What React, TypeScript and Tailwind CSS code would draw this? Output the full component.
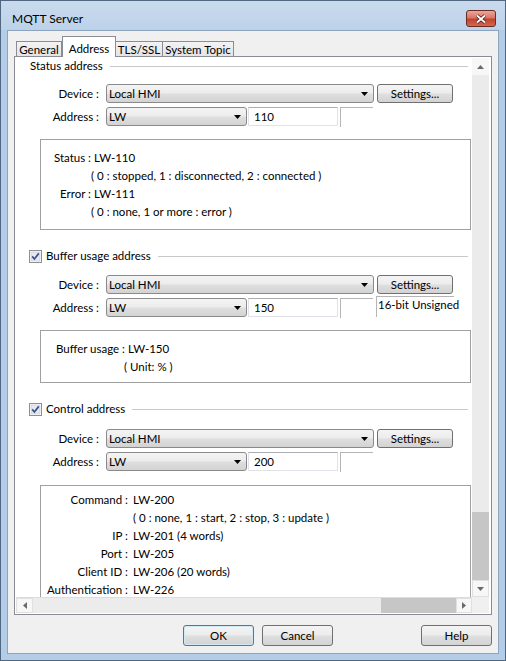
import React from "react";

const font = "font-['Lato','Noto_Sans',sans-serif]";
const btnBg =
  "bg-[linear-gradient(#f4f4f4_0%,#ececec_48%,#dfdfdf_52%,#d3d3d3_100%)]";

function Arrow({ dir, color = "#000" }: { dir: "up" | "down" | "left" | "right"; color?: string }) {
  const d = {
    down: "M0 0h7L3.5 4z",
    up: "M0 4h7L3.5 0z",
    right: "M0 0v7l4-3.5z",
    left: "M4 0v7L0 3.5z",
  }[dir];
  const vertical = dir === "up" || dir === "down";
  return (
    <svg width={vertical ? 7 : 4} height={vertical ? 4 : 7} viewBox={vertical ? "0 0 7 4" : "0 0 4 7"}>
      <path d={d} fill={color} />
    </svg>
  );
}

function Combo({ value, className }: { value: string; className: string }) {
  return (
    <div
      className={`flex h-[19px] items-center justify-between rounded-[3px] border border-[#8a8a8a] ${btnBg} pl-[2px] pr-[5px] ${className}`}
    >
      <span>{value}</span>
      <Arrow dir="down" />
    </div>
  );
}

function Button({ label, className }: { label: string; className: string }) {
  return (
    <div
      className={`flex items-center justify-center rounded-[3px] border border-[#707070] ${btnBg} ${className}`}
    >
      {label}
    </div>
  );
}

function Checkbox() {
  return (
    <svg width="13" height="13" viewBox="0 0 13 13">
      <rect x="0.5" y="0.5" width="12" height="12" fill="#fff" stroke="#8f8f8f" />
      <rect x="2" y="2" width="9" height="9" fill="#e6e9ee" stroke="#c4c8d0" strokeWidth="0.6" />
      <path d="M3.2 6.4 L5.4 9 L9.8 3.4" fill="none" stroke="#3b4f8f" strokeWidth="1.7" />
    </svg>
  );
}

function GroupHeader({ title, check, className = "" }: { title: string; check?: boolean; className?: string }) {
  return (
    <div className={`flex h-[16px] items-center ${check ? "pl-[13px]" : "pl-[14px]"} pr-[4px] ${className}`}>
      {check && (
        <span className="mr-[4px] flex">
          <Checkbox />
        </span>
      )}
      <span>{title}</span>
      <div className="ml-[7px] h-px flex-1 bg-[#c9c9c9]" />
    </div>
  );
}

function DeviceRows({ value, unit, className }: { value: string; unit?: string; className: string }) {
  return (
    <div className={className}>
      <div className="flex h-[19px] items-center">
        <span className="w-[83px] text-right">Device :</span>
        <Combo value="Local HMI" className="ml-[7px] w-[268px]" />
        <Button label="Settings..." className="ml-[3px] h-[19px] w-[76px]" />
      </div>
      <div className="mt-[4px] flex h-[19px] items-center">
        <span className="w-[83px] text-right">Address :</span>
        <Combo value="LW" className="ml-[7px] w-[141px]" />
        <div className="ml-[1px] flex h-[19px] w-[90px] items-center border border-[#dfe2e8] border-t-[#abadb3] bg-white pl-[5px]">
          {value}
        </div>
        <div className="ml-[2px] h-[20px] w-[33px] self-start border-l border-t border-[#b5b5b5]" />
        {unit && (
          <div className="-mt-[2px] ml-[3px] h-[21px] w-[78px] self-start whitespace-nowrap border-l border-t border-[#b5b5b5] pl-[1px] leading-[16px]">
            {unit}
          </div>
        )}
      </div>
    </div>
  );
}

type Line = { label?: string; value: string };

function InfoBox({
  lines,
  labelW,
  gap,
  indent,
  className,
}: {
  lines: Line[];
  labelW: string;
  gap: string;
  indent: string;
  className: string;
}) {
  return (
    <div className={`ml-[24px] mr-[1px] border border-[#a0a0a0] ${className}`}>
      {lines.map((l, i) =>
        l.label ? (
          <div key={i} className="flex h-[18px] items-center whitespace-nowrap">
            <span className={`${labelW} text-right`}>{l.label}</span>
            <span className={gap}>{l.value}</span>
          </div>
        ) : (
          <div key={i} className={`flex h-[18px] items-center whitespace-nowrap ${indent}`}>
            {l.value}
          </div>
        )
      )}
    </div>
  );
}

export default function App() {
  return (
    <div
      className={`flex h-[661px] w-[506px] flex-col border border-[#4f6780] bg-[#b3cce8] px-[6px] pb-[6px] text-[11.5px] text-black ${font}`}
    >
      {/* title bar */}
      <div className="-mx-[6px] flex h-[29px] items-start bg-[linear-gradient(#c9daed,#bcd2ea)] pl-[11px] pr-[9px]">
        <span className="mt-[9px] text-[12px]">MQTT Server</span>
        <div className="ml-auto mt-[9px] flex h-[17px] w-[30px] items-center justify-center rounded-[3px] border border-[#6b2a22] bg-[linear-gradient(#e9a897_0%,#d8776a_45%,#c4422f_55%,#d0694f_100%)]">
          <svg width="12" height="10" viewBox="0 0 12 10">
            <path d="M2 1.5 L10 8.5 M10 1.5 L2 8.5" stroke="#4a1b16" strokeWidth="3.4" />
            <path d="M2 1.5 L10 8.5 M10 1.5 L2 8.5" stroke="#fff" strokeWidth="1.8" />
          </svg>
        </div>
      </div>

      {/* client */}
      <div className="flex flex-1 flex-col border border-[#8ea3bd] bg-[#f0f0f0] px-[6px] pt-[5px]">
        {/* tabs */}
        <div className="flex h-[21px] items-end pl-[2px]">
          <div className="flex h-[16px] w-[46px] items-center justify-center border border-b-0 border-[#898c95] bg-[linear-gradient(#f3f3f3,#e3e3e3)] pt-[1px]">
            General
          </div>
          <div className="relative z-10 flex h-[21px] w-[54px] items-start justify-center border border-b-0 border-[#898c95] bg-white pt-[3px]">
            Address
          </div>
          <div className="flex h-[16px] w-[47px] items-center justify-center border border-b-0 border-l-0 border-[#898c95] bg-[linear-gradient(#f3f3f3,#e3e3e3)] pt-[1px]">
            TLS/SSL
          </div>
          <div className="flex h-[16px] w-[71px] items-center justify-center border border-b-0 border-l-0 border-[#898c95] bg-[linear-gradient(#f3f3f3,#e3e3e3)] pt-[1px]">
            System Topic
          </div>
        </div>

        {/* tab panel */}
        <div className="-mt-px h-[559px] border border-[#898c95] bg-white p-px">
          <div className="grid grid-cols-[456px_17px] grid-rows-[539px_16px]">
            {/* scrolled content */}
            <div className="overflow-hidden">
              <GroupHeader title="Status address" />
              <DeviceRows value="110" className="mt-[10px]" />
              <InfoBox
                className="mt-[13px] h-[91px] pt-[9px]"
                labelW="w-[50px]"
                gap="ml-[3px]"
                indent="pl-[50px]"
                lines={[
                  { label: "Status :", value: "LW-110" },
                  { value: "( 0 : stopped, 1 : disconnected, 2 : connected )" },
                  { label: "Error :", value: "LW-111" },
                  { value: "( 0 : none, 1 or more : error )" },
                ]}
              />
              <GroupHeader title="Buffer usage address" check className="mt-[18px]" />
              <DeviceRows value="150" unit="16-bit Unsigned" className="mt-[11px]" />
              <InfoBox
                className="mt-[13px] h-[53px] pt-[9px]"
                labelW="w-[84px]"
                gap="ml-[3px]"
                indent="pl-[83px]"
                lines={[
                  { label: "Buffer usage :", value: "LW-150" },
                  { value: "( Unit: % )" },
                ]}
              />
              <GroupHeader title="Control address" check className="mt-[18px]" />
              <DeviceRows value="200" className="mt-[12px]" />
              <InfoBox
                className="mt-[14px] h-[200px] pt-[5px]"
                labelW="w-[87px]"
                gap="ml-[5px]"
                indent="pl-[92px]"
                lines={[
                  { label: "Command :", value: "LW-200" },
                  { value: "( 0 : none, 1 : start, 2 : stop, 3 : update )" },
                  { label: "IP :", value: "LW-201 (4 words)" },
                  { label: "Port :", value: "LW-205" },
                  { label: "Client ID :", value: "LW-206 (20 words)" },
                  { label: "Authentication :", value: "LW-226" },
                ]}
              />
            </div>

            {/* vertical scrollbar */}
            <div className="flex flex-col bg-[#ebebeb]">
              <div className="flex h-[17px] items-center justify-center bg-[#f7f7f7]">
                <Arrow dir="up" color="#6a6a6a" />
              </div>
              <div className="flex flex-1 flex-col justify-end">
                <div className="h-[68px] bg-[#c6c6c6]" />
              </div>
              <div className="flex h-[17px] items-center justify-center border border-[#e0e0e0] bg-[#f7f7f7]">
                <Arrow dir="down" color="#6a6a6a" />
              </div>
            </div>

            {/* horizontal scrollbar */}
            <div className="flex border-t border-[#dcdcdc] bg-[#ececec]">
              <div className="flex w-[17px] items-center justify-center border border-[#e0e0e0] bg-[#f7f7f7]">
                <Arrow dir="left" color="#6a6a6a" />
              </div>
              <div className="flex flex-1 justify-end">
                <div className="w-[75px] bg-[#c6c6c6]" />
              </div>
              <div className="flex w-[16px] items-center justify-center border border-[#e0e0e0] bg-[#f7f7f7]">
                <Arrow dir="right" color="#6a6a6a" />
              </div>
            </div>
            <div className="bg-[#f0f0f0]" />
          </div>
        </div>

        {/* dialog buttons */}
        <div className="mt-[10px] flex h-[21px]">
          <Button
            label="OK"
            className="ml-[169px] w-[71px] border-[#3c7fb1] shadow-[inset_0_0_0_1px_#cfeaf8]"
          />
          <Button label="Cancel" className="ml-[8px] w-[71px]" />
          <Button label="Help" className="ml-auto w-[71px]" />
        </div>
      </div>
    </div>
  );
}
